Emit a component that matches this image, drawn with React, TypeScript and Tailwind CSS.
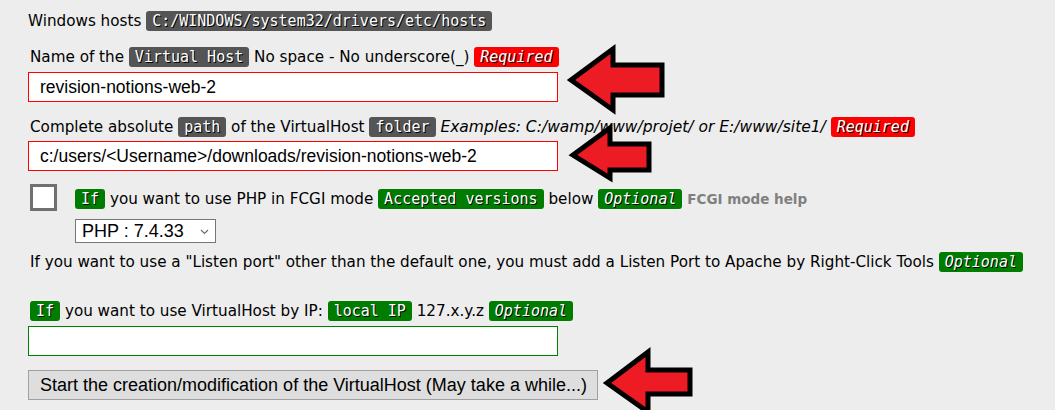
const label = "font-['DejaVu_Sans',Verdana,sans-serif] text-[15.2px] text-black";
const badgeBase =
  "inline-block font-['DejaVu_Sans_Mono',monospace] text-[15px] leading-[20px] px-[6px] rounded-[3px] text-white [text-shadow:1px_1px_0_#000]";

const Badge = ({ color, italic, children }: { color: "grey" | "green" | "red"; italic?: boolean; children: React.ReactNode }) => {
  const bg = color === "grey" ? "bg-[#555555]" : color === "green" ? "bg-[#007d00]" : "bg-[#ff0000]";
  return <span className={`${badgeBase} ${bg} ${italic ? "italic" : ""}`}>{children}</span>;
};

const inputCls =
  "block w-[530px] h-[30px] bg-white px-[11px] font-['Liberation_Sans',Arial,sans-serif] text-[17.5px] text-black outline-none";

export default function App() {
  return (
    <div className="relative w-[1055px] h-[410px] overflow-hidden bg-[#ededed] pl-[28px]">
      <div className={`${label} pt-[11px] leading-[20px]`}>
        Windows hosts <Badge color="grey">C:/WINDOWS/system32/drivers/etc/hosts</Badge>
      </div>

      <div className={`${label} mt-[16px] pl-[2px] leading-[20px]`}>
        Name of the <Badge color="grey">Virtual Host</Badge> No space - No underscore(_){" "}
        <Badge color="red" italic>Required</Badge>
      </div>
      <input className={`${inputCls} mt-[5px] border border-[#ff0000]`} defaultValue="revision-notions-web-2" />

      <div className={`${label} mt-[15px] pl-[2px] leading-[20px]`}>
        Complete absolute <Badge color="grey">path</Badge> of the VirtualHost <Badge color="grey">folder</Badge>{" "}
        <i className="text-[15.5px]">Examples: C:/wamp/www/projet/ or E:/www/site1/</i>{" "}
        <Badge color="red" italic>Required</Badge>
      </div>
      <input
        className={`${inputCls} mt-[4px] border border-[#ff0000]`}
        defaultValue="c:/users/<Username>/downloads/revision-notions-web-2"
      />

      <div className="flex mt-[13px] pl-[2px]">
        <div className="w-[27px] h-[27px] border-[3px] border-[#707070] bg-white shrink-0" />
        <div className="ml-[18px] pt-[5px]">
          <div className={`${label} leading-[21px]`}>
            <Badge color="green">If</Badge> you want to use PHP in FCGI mode <Badge color="green">Accepted versions</Badge>{" "}
            below <Badge color="green" italic>Optional</Badge>{" "}
            <span className="font-bold text-[#808080] text-[13.5px]">FCGI mode help</span>
          </div>
          <div className="mt-[9px] w-[141px] h-[24px] border border-[#767676] bg-white flex items-center justify-between pl-[6px] pr-[6px] font-['Liberation_Sans',Arial,sans-serif] text-[18px] text-black">
            <span>PHP : 7.4.33</span>
            <svg width="9" height="6" viewBox="0 0 9 6" className="mt-[2px]">
              <path d="M1 1 L4.5 4.5 L8 1" fill="none" stroke="#6d6d6d" strokeWidth="1.2" />
            </svg>
          </div>
        </div>
      </div>

      <div className={`${label} mt-[9px] pl-[2px] leading-[20px]`}>
        If you want to use a "Listen port" other than the default one, you must add a Listen Port to Apache by Right-Click
        Tools <Badge color="green" italic>Optional</Badge>
      </div>

      <div className={`${label} mt-[29px] pl-[2px] leading-[21px]`}>
        <Badge color="green">If</Badge> you want to use VirtualHost by IP: <Badge color="green">local IP</Badge> 127.x.y.z{" "}
        <Badge color="green" italic>Optional</Badge>
      </div>
      <input className={`${inputCls} mt-[4px] border border-[#008000]`} defaultValue="" />

      <button className="mt-[14px] block w-[570px] h-[30px] border border-[#a0a0a0] bg-[#dedede] text-left pl-[11px] font-['Liberation_Sans',Arial,sans-serif] text-[18px] text-black">
        Start the creation/modification of the VirtualHost (May take a while...)
      </button>

      <svg className="absolute inset-0 pointer-events-none" width="1055" height="410" viewBox="0 0 1055 410">
        <g fill="#ed1c24" stroke="#000" strokeWidth="5" strokeLinejoin="miter">
          <polygon points="571,80 613,49 613,65 662,65 662,95 613,95 613,110" />
          <polygon points="573,155 610,128 610,144 649,144 649,170 610,170 610,178" />
          <polygon points="607,383 648,352 648,370 690,370 690,394 648,394 648,412" />
        </g>
      </svg>
    </div>
  );
}
